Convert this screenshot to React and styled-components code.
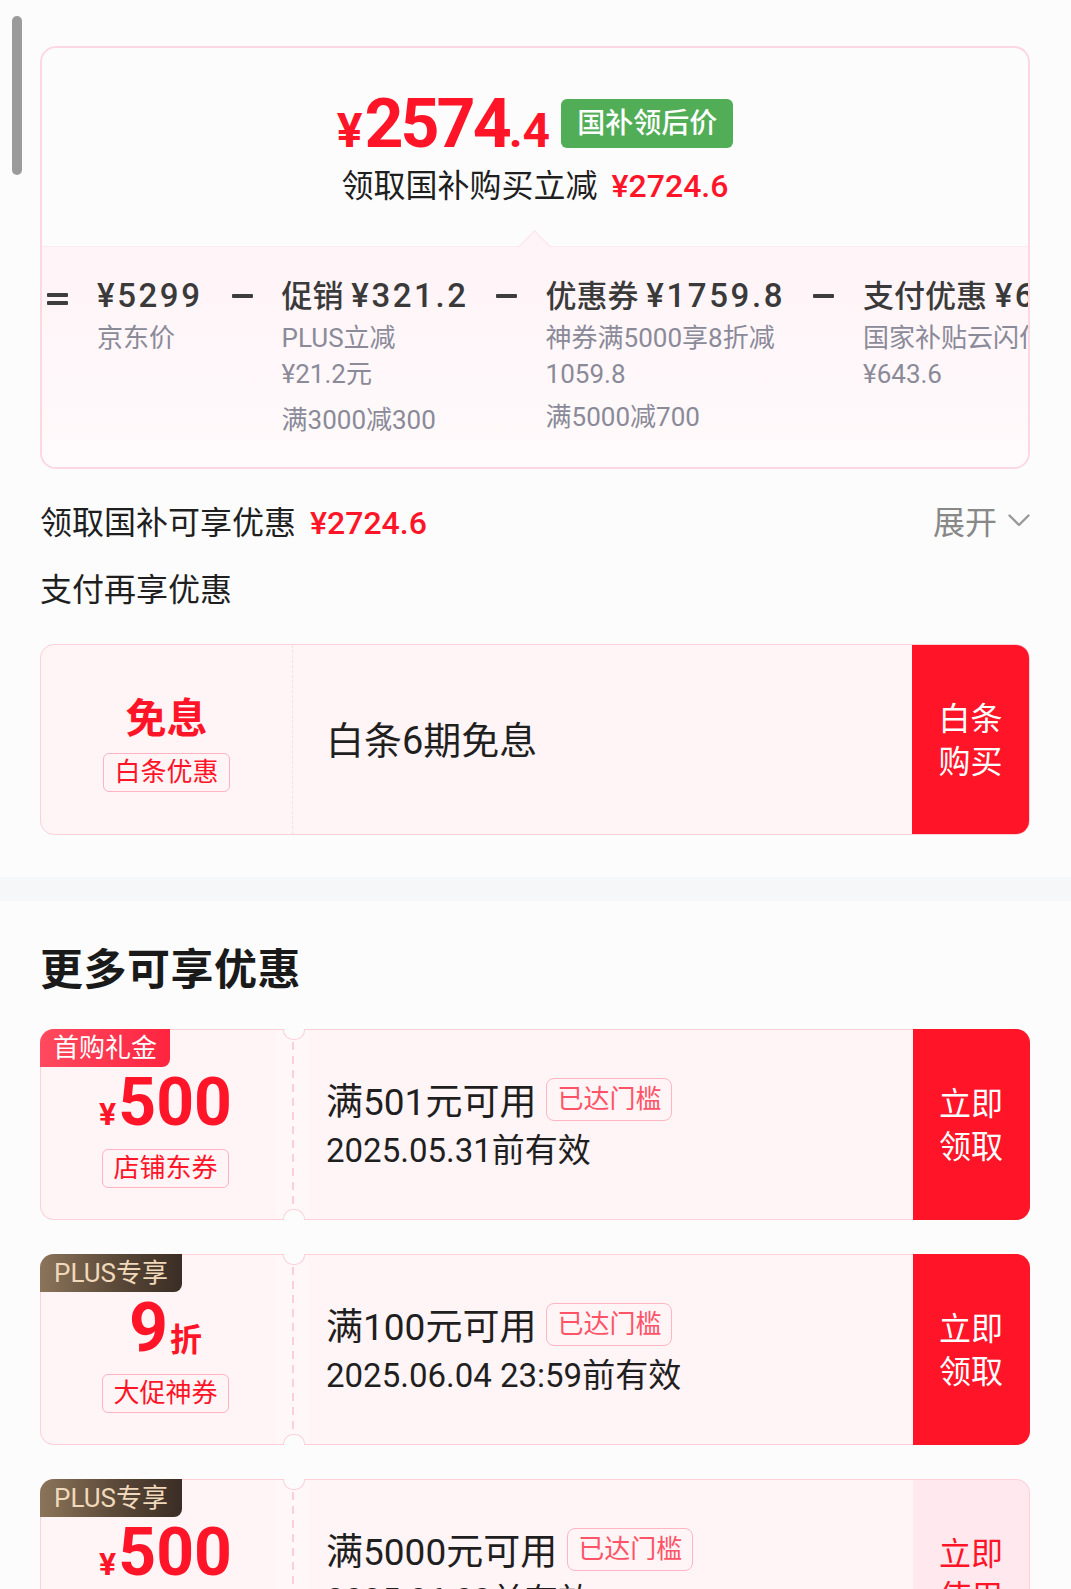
import React from 'react';
import styled, { createGlobalStyle } from 'styled-components';

const RED = '#ff1428';
const PINK_LINE = '#fdd0da';
const PAGE_BG = '#fcfcfd';

const GlobalStyle = createGlobalStyle`
  html, body {
    margin: 0;
    padding: 0;
    background: ${PAGE_BG};
  }
  body {
    font-family: Roboto, "Noto Sans CJK SC", sans-serif;
    color: #1f1f1f;
  }
  * { box-sizing: border-box; }
`;

const Page = styled.div`
  position: relative;
  width: 1071px;
  padding: 46px 41px 60px 40px;
`;

const ScrollThumb = styled.div`
  position: absolute;
  left: 12px;
  top: 16px;
  width: 10px;
  height: 159px;
  border-radius: 5px;
  background: #9b9b9b;
`;

/* ---------- price summary card ---------- */

const PriceCard = styled.div`
  border: 2px solid #fdd8e2;
  border-radius: 16px;
  overflow: hidden;
  background: #fdfcfd;
`;

const PriceTop = styled.div`
  display: flex;
  flex-direction: column;
  align-items: center;
  padding: 51px 0 40px;
`;

const PriceRow = styled.div`
  display: flex;
  align-items: center;
  gap: 11px;
  height: 49px;
`;

const BigPrice = styled.span`
  color: ${RED};
  font-weight: 700;
  line-height: 1;
  white-space: nowrap;
`;

const PricePart = styled.span`
  font-size: ${(p) => p.$size}px;
  letter-spacing: ${(p) => p.$track || 0}px;
  margin-right: ${(p) => p.$gap || 0}px;
`;

const GreenBadge = styled.span`
  height: 49px;
  line-height: 49px;
  padding: 0 16px;
  border-radius: 6px;
  background: #52ad57;
  color: #fff;
  font-size: 28px;
  font-weight: 500;
`;

const SubLine = styled.div`
  margin-top: 18px;
  font-size: 32px;
  line-height: 40px;
  color: #1f1f1f;
`;

const RedAmount = styled.span`
  color: ${RED};
  font-weight: 500;
  margin-left: ${(p) => p.$gap || 14}px;
`;

const PriceBottom = styled.div`
  position: relative;
  border-top: 1px solid #fdebf0;
  background: linear-gradient(180deg, #fff4f7 0%, #fffafb 100%);
  &::before {
    content: '';
    position: absolute;
    left: 481px;
    top: -12px;
    width: 22px;
    height: 22px;
    background: #fff4f7;
    border-top: 1px solid #fde2e9;
    border-left: 1px solid #fde2e9;
    transform: rotate(45deg);
  }
`;

const Breakdown = styled.div`
  position: relative;
  display: flex;
  align-items: flex-start;
  overflow: hidden;
  white-space: nowrap;
  padding: 29px 0 29px 5px;
`;

const Op = styled.div`
  flex-shrink: 0;
  height: 40px;
  display: flex;
  flex-direction: column;
  justify-content: center;
  gap: 4px;
  margin: 0 ${(p) => p.$right}px 0 ${(p) => p.$left}px;
  padding-top: ${(p) => p.$shift || 0}px;
`;

const OpBar = styled.span`
  display: block;
  width: 21px;
  height: 4px;
  border-radius: 1px;
  background: #3d3d3d;
`;

const Col = styled.div`
  flex-shrink: 0;
  display: flex;
  flex-direction: column;
`;

const ColMain = styled.div`
  font-size: 31px;
  line-height: 40px;
  font-weight: 500;
  color: #3a3a3a;
  margin-bottom: 3px;
`;

const Num = styled.span`
  font-size: 33px;
  letter-spacing: 2.6px;
`;

const ColSub = styled.div`
  font-size: 26px;
  line-height: 36px;
  color: #8a8a99;
  margin-top: ${(p) => p.$top || 0}px;
`;

/* ---------- text rows ---------- */

const InfoRow = styled.div`
  display: flex;
  align-items: center;
  justify-content: space-between;
  margin-top: 31px;
  height: 40px;
  font-size: 32px;
`;

const Expand = styled.div`
  display: flex;
  align-items: center;
  gap: 11px;
  color: #888;
`;

const Label = styled.div`
  margin-top: ${(p) => p.$top}px;
  font-size: 32px;
  line-height: 40px;
  color: #1f1f1f;
`;

/* ---------- pay card ---------- */

const PayCard = styled.div`
  margin-top: 34px;
  height: 191px;
  display: flex;
  border: 1px solid ${PINK_LINE};
  border-radius: 14px;
  overflow: hidden;
  background: #fff5f7;
`;

const PayLeft = styled.div`
  width: 252px;
  border-right: 1px dashed #fbdde4;
  display: flex;
  flex-direction: column;
  align-items: center;
  justify-content: center;
  padding-top: 9px;
`;

const RedWord = styled.div`
  color: ${RED};
  font-size: 41px;
  font-weight: 700;
  line-height: 46px;
`;

const OutlineTag = styled.span`
  margin-top: ${(p) => p.$top || 13}px;
  height: 39px;
  line-height: 37px;
  padding: 0 10px;
  font-size: 26px;
  color: ${RED};
  border: 1px solid #ffb2c0;
  border-radius: 6px;
`;

const PayBody = styled.div`
  flex: 1;
  display: flex;
  align-items: center;
  padding: 0 0 5px 33px;
  font-size: 38px;
  color: #1f1f1f;
`;

const ActionBtn = styled.div`
  width: 117px;
  flex-shrink: 0;
  display: flex;
  align-items: center;
  justify-content: center;
  text-align: center;
  font-size: 32px;
  line-height: 43px;
  padding-top: 3px;
  background: ${(p) => (p.$pale ? '#ffe9ef' : RED)};
  color: ${(p) => (p.$pale ? RED : '#fff')};
`;

/* ---------- more offers ---------- */

const Band = styled.div`
  margin: 42px -41px 0 -40px;
  height: 24px;
  background: #f6f7f9;
`;

const SectionTitle = styled.h2`
  margin: 41px 0 0;
  font-size: 43px;
  line-height: 56px;
  font-weight: 700;
  color: #1a1a1a;
  letter-spacing: 0.5px;
`;

const CouponList = styled.div`
  margin-top: 31px;
  display: flex;
  flex-direction: column;
  gap: 34px;
`;

const Coupon = styled.div`
  display: flex;
  height: 191px;
`;

const CouponLeft = styled.div`
  position: relative;
  width: 236px;
  background: #fff4f6;
  border: 1px solid ${PINK_LINE};
  border-right: none;
  border-radius: 14px 0 0 14px;
  display: flex;
  flex-direction: column;
  align-items: center;
  justify-content: center;
  padding: 9px 0 0 14px;
`;

const CornerTag = styled.span`
  position: absolute;
  top: -1px;
  left: -1px;
  height: 38px;
  line-height: 38px;
  padding: 0 ${(p) => (p.$plus ? 14 : 13)}px;
  font-size: 26px;
  border-radius: 14px 0 8px 0;
  color: ${(p) => (p.$plus ? '#f0d8bb' : '#fff')};
  background: ${(p) =>
    p.$plus
      ? 'linear-gradient(90deg, #8b7459 0%, #5a4838 55%, #3a2d24 100%)'
      : 'linear-gradient(90deg, #ff4a5e 0%, #ff2440 100%)'};
`;

const CouponValue = styled.div`
  display: flex;
  align-items: baseline;
  color: ${RED};
  font-weight: 700;
  line-height: 66px;
  height: 66px;
`;

const ValuePart = styled.span`
  font-size: ${(p) => p.$size}px;
  margin-left: ${(p) => p.$gap || 0}px;
`;

const CouponGap = styled.div`
  position: relative;
  width: 33px;
  background: #fff7f8;
  border-top: 1px solid ${PINK_LINE};
  border-bottom: 1px solid ${PINK_LINE};
  display: flex;
  justify-content: center;
  padding: 12px 0;
  &::before,
  &::after {
    content: '';
    position: absolute;
    left: 50%;
    width: 20px;
    height: 10px;
    margin-left: -10px;
    background: ${PAGE_BG};
    border: 1px solid ${PINK_LINE};
  }
  &::before {
    top: -1px;
    border-top: none;
    border-radius: 0 0 10px 10px;
  }
  &::after {
    bottom: -1px;
    border-bottom: none;
    border-radius: 10px 10px 0 0;
  }
`;

const Dash = styled.span`
  width: 2px;
  background: repeating-linear-gradient(180deg, #fccfd9 0 8px, transparent 8px 14px);
`;

const CouponBody = styled.div`
  flex: 1;
  background: #fff4f6;
  border-top: 1px solid ${PINK_LINE};
  border-bottom: 1px solid ${PINK_LINE};
  padding-left: 17px;
  display: flex;
  flex-direction: column;
  justify-content: center;
`;

const TitleRow = styled.div`
  display: flex;
  align-items: center;
  gap: 10px;
  height: 48px;
  margin-top: -3px;
`;

const CouponTitle = styled.span`
  font-size: 37px;
  color: #1f1f1f;
`;

const ReachedTag = styled.span`
  height: 43px;
  line-height: 41px;
  padding: 0 10px;
  font-size: 26px;
  color: #ff5468;
  border: 1px solid #ffb6c2;
  border-radius: 8px;
`;

const CouponDate = styled.div`
  margin-top: 8px;
  font-size: 33px;
  line-height: 40px;
  color: #1f1f1f;
`;

const CouponBtn = styled(ActionBtn)`
  border-radius: 0 14px 14px 0;
  border: 1px solid ${(p) => (p.$pale ? PINK_LINE : RED)};
  border-left: none;
`;

const coupons = [
  {
    tag: '首购礼金',
    plus: false,
    kind: 'cash',
    value: '500',
    label: '店铺东券',
    title: '满501元可用',
    date: '2025.05.31前有效',
    action: ['立即', '领取'],
  },
  {
    tag: 'PLUS专享',
    plus: true,
    kind: 'discount',
    value: '9',
    label: '大促神券',
    title: '满100元可用',
    date: '2025.06.04 23:59前有效',
    action: ['立即', '领取'],
  },
  {
    tag: 'PLUS专享',
    plus: true,
    kind: 'cash',
    value: '500',
    label: '店铺东券',
    title: '满5000元可用',
    date: '2025.06.03前有效',
    action: ['立即', '使用'],
    pale: true,
  },
];

function Chevron() {
  return (
    <svg width="22" height="13" viewBox="0 0 22 13" fill="none">
      <polyline points="1.5,1.5 11,11 20.5,1.5" stroke="#9a9a9a" strokeWidth="2.4" strokeLinecap="round" strokeLinejoin="round" />
    </svg>
  );
}

function CouponCard({ c }) {
  return (
    <Coupon>
      <CouponLeft>
        <CornerTag $plus={c.plus}>{c.tag}</CornerTag>
        {c.kind === 'cash' ? (
          <CouponValue>
            <ValuePart $size={32}>¥</ValuePart>
            <ValuePart $size={66} $gap={2}>{c.value}</ValuePart>
          </CouponValue>
        ) : (
          <CouponValue>
            <ValuePart $size={68}>{c.value}</ValuePart>
            <ValuePart $size={32} $gap={2}>折</ValuePart>
          </CouponValue>
        )}
        <OutlineTag>{c.label}</OutlineTag>
      </CouponLeft>
      <CouponGap>
        <Dash />
      </CouponGap>
      <CouponBody>
        <TitleRow>
          <CouponTitle>{c.title}</CouponTitle>
          <ReachedTag>已达门槛</ReachedTag>
        </TitleRow>
        <CouponDate>{c.date}</CouponDate>
      </CouponBody>
      <CouponBtn $pale={c.pale}>
        {c.action[0]}
        <br />
        {c.action[1]}
      </CouponBtn>
    </Coupon>
  );
}

export default function App() {
  return (
    <>
      <GlobalStyle />
      <Page>
        <ScrollThumb />

        <PriceCard>
          <PriceTop>
            <PriceRow>
              <BigPrice>
                <PricePart $size={48} $gap={2}>¥</PricePart>
                <PricePart $size={68} $track={-3}>2574</PricePart>
                <PricePart $size={48}>.4</PricePart>
              </BigPrice>
              <GreenBadge>国补领后价</GreenBadge>
            </PriceRow>
            <SubLine>
              领取国补购买立减
              <RedAmount>¥2724.6</RedAmount>
            </SubLine>
          </PriceTop>

          <PriceBottom>
            <Breakdown>
              <Op $left={0} $right={29} $shift={6}>
                <OpBar />
                <OpBar />
              </Op>
              <Col>
                <ColMain><Num>¥5299</Num></ColMain>
                <ColSub>京东价</ColSub>
              </Col>
              <Op $left={29} $right={29}>
                <OpBar />
              </Op>
              <Col>
                <ColMain>促销 <Num>¥321.2</Num></ColMain>
                <ColSub>PLUS立减</ColSub>
                <ColSub>¥21.2元</ColSub>
                <ColSub $top={10}>满3000减300</ColSub>
              </Col>
              <Op $left={27} $right={29}>
                <OpBar />
              </Op>
              <Col>
                <ColMain>优惠券 <Num>¥1759.8</Num></ColMain>
                <ColSub>神券满5000享8折减</ColSub>
                <ColSub>1059.8</ColSub>
                <ColSub $top={7}>满5000减700</ColSub>
              </Col>
              <Op $left={28} $right={29}>
                <OpBar />
              </Op>
              <Col>
                <ColMain>支付优惠 <Num>¥643.6</Num></ColMain>
                <ColSub>国家补贴云闪付</ColSub>
                <ColSub>¥643.6</ColSub>
              </Col>
            </Breakdown>
          </PriceBottom>
        </PriceCard>

        <InfoRow>
          <span>
            领取国补可享优惠
            <RedAmount $gap={14}>¥2724.6</RedAmount>
          </span>
          <Expand>
            展开
            <Chevron />
          </Expand>
        </InfoRow>

        <Label $top={30}>支付再享优惠</Label>

        <PayCard>
          <PayLeft>
            <RedWord>免息</RedWord>
            <OutlineTag $top={11}>白条优惠</OutlineTag>
          </PayLeft>
          <PayBody>白条6期免息</PayBody>
          <ActionBtn>
            白条
            <br />
            购买
          </ActionBtn>
        </PayCard>

        <Band />

        <SectionTitle>更多可享优惠</SectionTitle>

        <CouponList>
          {coupons.map((c, i) => (
            <CouponCard key={i} c={c} />
          ))}
        </CouponList>
      </Page>
    </>
  );
}
